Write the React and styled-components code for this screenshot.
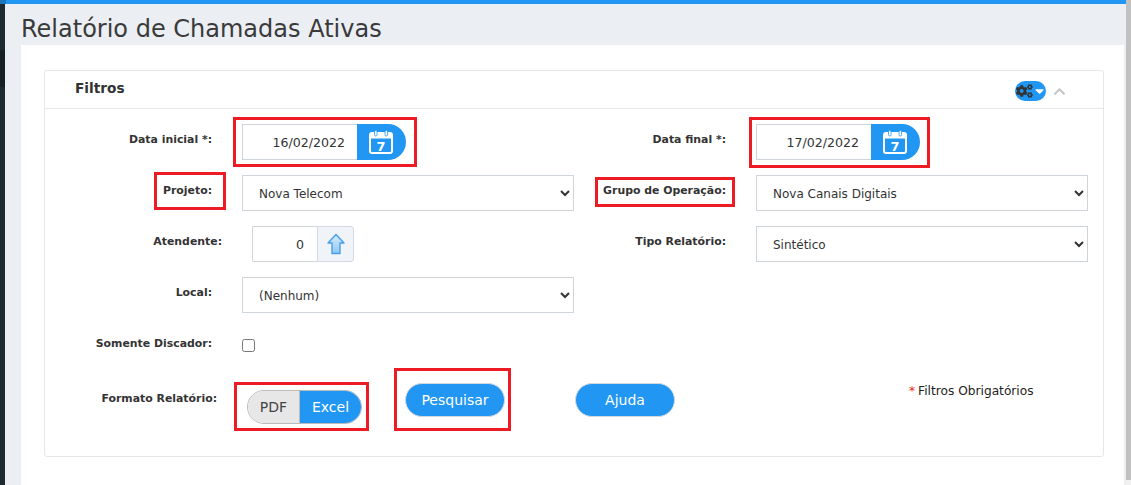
import React from 'react';
import styled, { createGlobalStyle } from 'styled-components';
import { FaChevronUp, FaCaretDown, FaCogs } from 'react-icons/fa';

const GlobalStyle = createGlobalStyle`
  html, body {
    margin: 0;
    padding: 0;
    height: 100%;
    overflow: hidden;
  }
  * {
    box-sizing: border-box;
  }
`;

const Shell = styled.div`
  display: flex;
  width: 1131px;
  height: 485px;
  font-family: 'DejaVu Sans', Verdana, sans-serif;
  background: #ebeef3;
  overflow: hidden;
`;

const Page = styled.div`
  flex: 1;
  display: flex;
  flex-direction: column;
  min-width: 0;
`;

const TopBar = styled.div`
  height: 4px;
  flex-shrink: 0;
  background: linear-gradient(to right, #1b75bb 6px, #2196f3 6px);
`;

const Body = styled.div`
  flex: 1;
  display: flex;
`;

const Sidebar = styled.div`
  width: 5px;
  flex-shrink: 0;
  background: linear-gradient(
    to bottom,
    #1f2a30 46px,
    #172024 46px,
    #172024 83px,
    #1f2a30 83px
  );
`;

const Main = styled.div`
  flex: 1;
  display: flex;
  flex-direction: column;
  padding-left: 16px;
  padding-right: 2px;
`;

const Scrollbar = styled.div`
  width: 5px;
  flex-shrink: 0;
  background: linear-gradient(to bottom, #c1c1c1 480px, #f1f1f1 480px);
`;

const Title = styled.h1`
  margin: 0;
  height: 41px;
  font-size: 24px;
  font-weight: 400;
  line-height: 51px;
  color: #3a3a3a;
  white-space: nowrap;
`;

const Content = styled.div`
  flex: 1;
  background: #fff;
  padding: 25px 20px 0 23px;
`;

const Panel = styled.section`
  height: 387px;
  border: 1px solid #e7e7e7;
  border-radius: 3px;
`;

const PanelHeader = styled.header`
  display: flex;
  align-items: center;
  justify-content: space-between;
  height: 38px;
  padding: 0 37px 0 30px;
  border-bottom: 1px solid #e7e7e7;
`;

const PanelTitle = styled.h2`
  margin: 0 0 4px;
  font-size: 13.7px;
  font-weight: 700;
  color: #333;
`;

const HeaderTools = styled.div`
  display: flex;
  align-items: center;
  gap: 7px;
  margin-top: 3px;
  color: #c4c4c4;
`;

const ToolPill = styled.div`
  display: flex;
  align-items: center;
  justify-content: space-between;
  width: 31px;
  height: 20px;
  padding: 0 0 0 1px;
  border-radius: 10px;
  background: #2196f3;
  color: #fff;
`;

const Cogs = styled(FaCogs)`
  color: #333;
`;

const FormGrid = styled.div`
  display: grid;
  grid-template-columns: 530px 514px;
  grid-auto-rows: 51px;
  padding-top: 15px;
`;

const Field = styled.div`
  display: flex;
  align-items: flex-start;
`;

const LabelCell = styled.div`
  width: ${(p) => p.$width}px;
  flex-shrink: 0;
  height: 36px;
  display: flex;
  justify-content: flex-end;
  align-items: flex-start;
  padding-top: 9px;
  padding-right: ${(p) => p.$right ?? 30}px;
`;

const Label = styled.label`
  font-size: 10.9px;
  font-weight: 700;
  color: #333;
  white-space: nowrap;
`;

const Marked = styled.div`
  position: relative;
  display: flex;
`;

const RedBox = styled.span`
  position: absolute;
  left: ${(p) => p.$left}px;
  top: ${(p) => p.$top}px;
  width: ${(p) => p.$w}px;
  height: ${(p) => p.$h}px;
  border: 3px solid #ed1c24;
  pointer-events: none;
`;

const DateInput = styled.div`
  display: flex;
  align-items: center;
  justify-content: flex-end;
  width: 115px;
  height: 36px;
  padding-right: 12px;
  border: 1px solid #ced4da;
  border-right: none;
  font-size: 12.6px;
  color: #333;
`;

const DateButton = styled.div`
  display: flex;
  align-items: center;
  justify-content: center;
  width: 49px;
  height: 36px;
  padding-right: 1px;
  background: #2196f3;
  border-radius: 0 18px 18px 0;
`;

const SelectBox = styled.select`
  width: 332px;
  height: 36px;
  padding: 2px 12px 0;
  border: 1px solid #ced4da;
  border-radius: 0;
  background: #fff;
  font-family: inherit;
  font-size: 12px;
  color: #333;
`;

const Spinner = styled.div`
  display: flex;
  margin-left: 10px;
  height: 36px;
`;

const SpinnerValue = styled.div`
  display: flex;
  align-items: center;
  justify-content: flex-end;
  width: 65px;
  padding-right: 13px;
  border: 1px solid #ced4da;
  border-right: none;
  border-radius: 2px 0 0 2px;
  font-size: 12.6px;
  color: #333;
`;

const SpinnerButton = styled.div`
  display: flex;
  align-items: center;
  justify-content: center;
  width: 37px;
  border: 1px solid #d5dae2;
  border-radius: 0 3px 3px 0;
  background: #f0f3f8;
`;

const CheckRow = styled.div`
  display: flex;
  align-items: flex-start;
  height: 55px;
`;

const Check = styled.input`
  width: 13px;
  height: 13px;
  margin: 11px 0 0 0;
`;

const ActionRow = styled.div`
  display: flex;
  align-items: flex-start;
`;

const Toggle = styled.div`
  display: flex;
  width: 115px;
  height: 34px;
  margin: 7px 0 0 5px;
  border: 1px solid #bbb;
  border-radius: 17px;
  overflow: hidden;
`;

const ToggleOption = styled.div`
  display: flex;
  align-items: center;
  justify-content: center;
  font-size: 14px;
  width: ${(p) => (p.$active ? 61 : 52)}px;
  background: ${(p) => (p.$active ? '#2196f3' : '#e7e7e7')};
  color: ${(p) => (p.$active ? '#fff' : '#444')};
  border-right: ${(p) => (p.$active ? 'none' : '1px solid #bbb')};
`;

const PillButton = styled.button`
  width: 100px;
  height: 34px;
  margin-left: ${(p) => p.$left}px;
  padding: 0;
  border: 1px solid #cfd8e0;
  border-radius: 17px;
  background: #2196f3;
  color: #fff;
  font-family: inherit;
  font-size: 14px;
`;

const Note = styled.div`
  margin: 1px 0 0 234px;
  font-size: 12.2px;
  color: #222;
  white-space: nowrap;
`;

const Star = styled.span`
  color: #ed1c24;
  margin-right: 3px;
`;

const CalendarIcon = () => (
  <svg width="24" height="24" viewBox="0 0 24 24" fill="none">
    <rect x="1" y="3" width="22" height="20" rx="2" stroke="#fff" strokeWidth="2" />
    <rect x="1" y="3" width="22" height="5.5" fill="#fff" />
    <rect x="5.5" y="0.5" width="2.6" height="5.5" rx="1.3" fill="#fff" stroke="#2196f3" strokeWidth="0.8" />
    <rect x="16" y="0.5" width="2.6" height="5.5" rx="1.3" fill="#fff" stroke="#2196f3" strokeWidth="0.8" />
    <text x="12" y="20.5" textAnchor="middle" fontSize="13" fontWeight="700" fontFamily="DejaVu Sans, sans-serif" fill="#fff">7</text>
  </svg>
);

const ArrowUpIcon = () => (
  <svg width="18" height="22" viewBox="0 0 18 22">
    <defs>
      <linearGradient id="arrowFill" x1="0" y1="0" x2="0" y2="1">
        <stop offset="0" stopColor="#d7ecfd" />
        <stop offset="1" stopColor="#8cc8f7" />
      </linearGradient>
    </defs>
    <path d="M9 1.5 L17 10 H13 V20.5 H5 V10 H1 Z" fill="url(#arrowFill)" stroke="#4a9fe8" strokeWidth="1.4" strokeLinejoin="round" />
  </svg>
);

const App = () => {
  return (
    <>
      <GlobalStyle />
      <Shell>
        <Page>
          <TopBar />
          <Body>
            <Sidebar />
            <Main>
              <Title>Relatório de Chamadas Ativas</Title>
              <Content>
                <Panel>
                  <PanelHeader>
                    <PanelTitle>Filtros</PanelTitle>
                    <HeaderTools>
                      <ToolPill>
                        <Cogs size={18} />
                        <FaCaretDown size={14} />
                      </ToolPill>
                      <FaChevronUp size={13} />
                    </HeaderTools>
                  </PanelHeader>
                  <FormGrid>
                    <Field>
                      <LabelCell $width={197}><Label>Data inicial *:</Label></LabelCell>
                      <Marked>
                        <RedBox $left={-9} $top={-7} $w={184} $h={50} />
                        <DateInput>16/02/2022</DateInput>
                        <DateButton><CalendarIcon /></DateButton>
                      </Marked>
                    </Field>
                    <Field>
                      <LabelCell $width={181}><Label>Data final *:</Label></LabelCell>
                      <Marked>
                        <RedBox $left={-7} $top={-7} $w={181} $h={51} />
                        <DateInput>17/02/2022</DateInput>
                        <DateButton><CalendarIcon /></DateButton>
                      </Marked>
                    </Field>
                    <Field>
                      <LabelCell $width={197}>
                        <Marked>
                          <Label>Projeto:</Label>
                          <RedBox $left={-9} $top={-12} $w={72} $h={38} />
                        </Marked>
                      </LabelCell>
                      <SelectBox defaultValue="Nova Telecom"><option>Nova Telecom</option></SelectBox>
                    </Field>
                    <Field>
                      <LabelCell $width={181}>
                        <Marked>
                          <Label>Grupo de Operação:</Label>
                          <RedBox $left={-8} $top={-7} $w={140} $h={30} />
                        </Marked>
                      </LabelCell>
                      <SelectBox defaultValue="Nova Canais Digitais"><option>Nova Canais Digitais</option></SelectBox>
                    </Field>
                    <Field>
                      <LabelCell $width={197} $right={20}><Label>Atendente:</Label></LabelCell>
                      <Spinner>
                        <SpinnerValue>0</SpinnerValue>
                        <SpinnerButton><ArrowUpIcon /></SpinnerButton>
                      </Spinner>
                    </Field>
                    <Field>
                      <LabelCell $width={181}><Label>Tipo Relatório:</Label></LabelCell>
                      <SelectBox defaultValue="Sintético"><option>Sintético</option></SelectBox>
                    </Field>
                    <Field>
                      <LabelCell $width={197}><Label>Local:</Label></LabelCell>
                      <SelectBox defaultValue="(Nenhum)"><option>(Nenhum)</option></SelectBox>
                    </Field>
                  </FormGrid>
                  <CheckRow>
                    <LabelCell $width={197}><Label>Somente Discador:</Label></LabelCell>
                    <Check type="checkbox" />
                  </CheckRow>
                  <ActionRow>
                    <LabelCell $width={197} $right={25}><Label>Formato Relatório:</Label></LabelCell>
                    <Marked>
                      <RedBox $left={-8} $top={-1} $w={135} $h={49} />
                      <Toggle>
                        <ToggleOption>PDF</ToggleOption>
                        <ToggleOption $active>Excel</ToggleOption>
                      </Toggle>
                    </Marked>
                    <Marked>
                      <RedBox $left={32} $top={-15} $w={117} $h={63} />
                      <PillButton $left={43}>Pesquisar</PillButton>
                    </Marked>
                    <PillButton $left={70}>Ajuda</PillButton>
                    <Note><Star>*</Star>Filtros Obrigatórios</Note>
                  </ActionRow>
                </Panel>
              </Content>
            </Main>
          </Body>
        </Page>
        <Scrollbar />
      </Shell>
    </>
  );
};

export default App;
